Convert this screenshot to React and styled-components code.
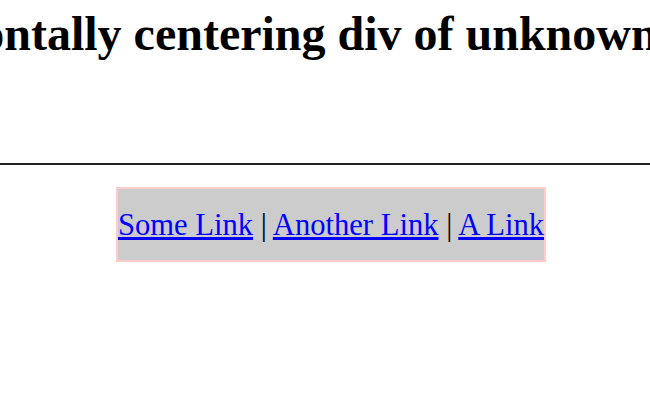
import React from "react";
import styled, { createGlobalStyle } from "styled-components";

const Global = createGlobalStyle`
  html, body {
    margin: 0;
    padding: 0;
    background: #fff;
    overflow: hidden;
  }
  body {
    font-family: "Liberation Serif", "Times New Roman", serif;
  }
`;

const Page = styled.div`
  width: 650px;
  height: 400px;
  overflow: hidden;
`;

const Title = styled.h1`
  display: flex;
  justify-content: center;
  white-space: nowrap;
  margin: 0;
  padding-top: 8px;
  height: 142px;
  font-size: 48px;
  line-height: 52px;
  font-weight: bold;
  color: #000;
`;

const Rule = styled.hr`
  margin: 13px 0 0;
  border: 0;
  border-top: 2px solid #222;
  height: 0;
`;

const Center = styled.div`
  display: flex;
  justify-content: center;
  margin-top: 22px;
  padding-left: 12px;
`;

const NavBox = styled.div`
  background: #cccccc;
  border: 2px solid #ffcccc;
  padding: 17px 0 15px;
  font-size: 30.6px;
  line-height: 39px;
  color: #000;
`;

const NavLink = styled.a`
  color: #0000ff;
  text-decoration: underline;
`;

export default function App() {
  const links = ["Some Link", "Another Link", "A Link"];
  return (
    <Page>
      <Global />
      <Title>Horizontally centering div of unknown width</Title>
      <Rule />
      <Center>
        <NavBox>
          {links.map((l, i) => (
            <React.Fragment key={l}>
              {i > 0 && " | "}
              <NavLink href="#">{l}</NavLink>
            </React.Fragment>
          ))}
        </NavBox>
      </Center>
    </Page>
  );
}
